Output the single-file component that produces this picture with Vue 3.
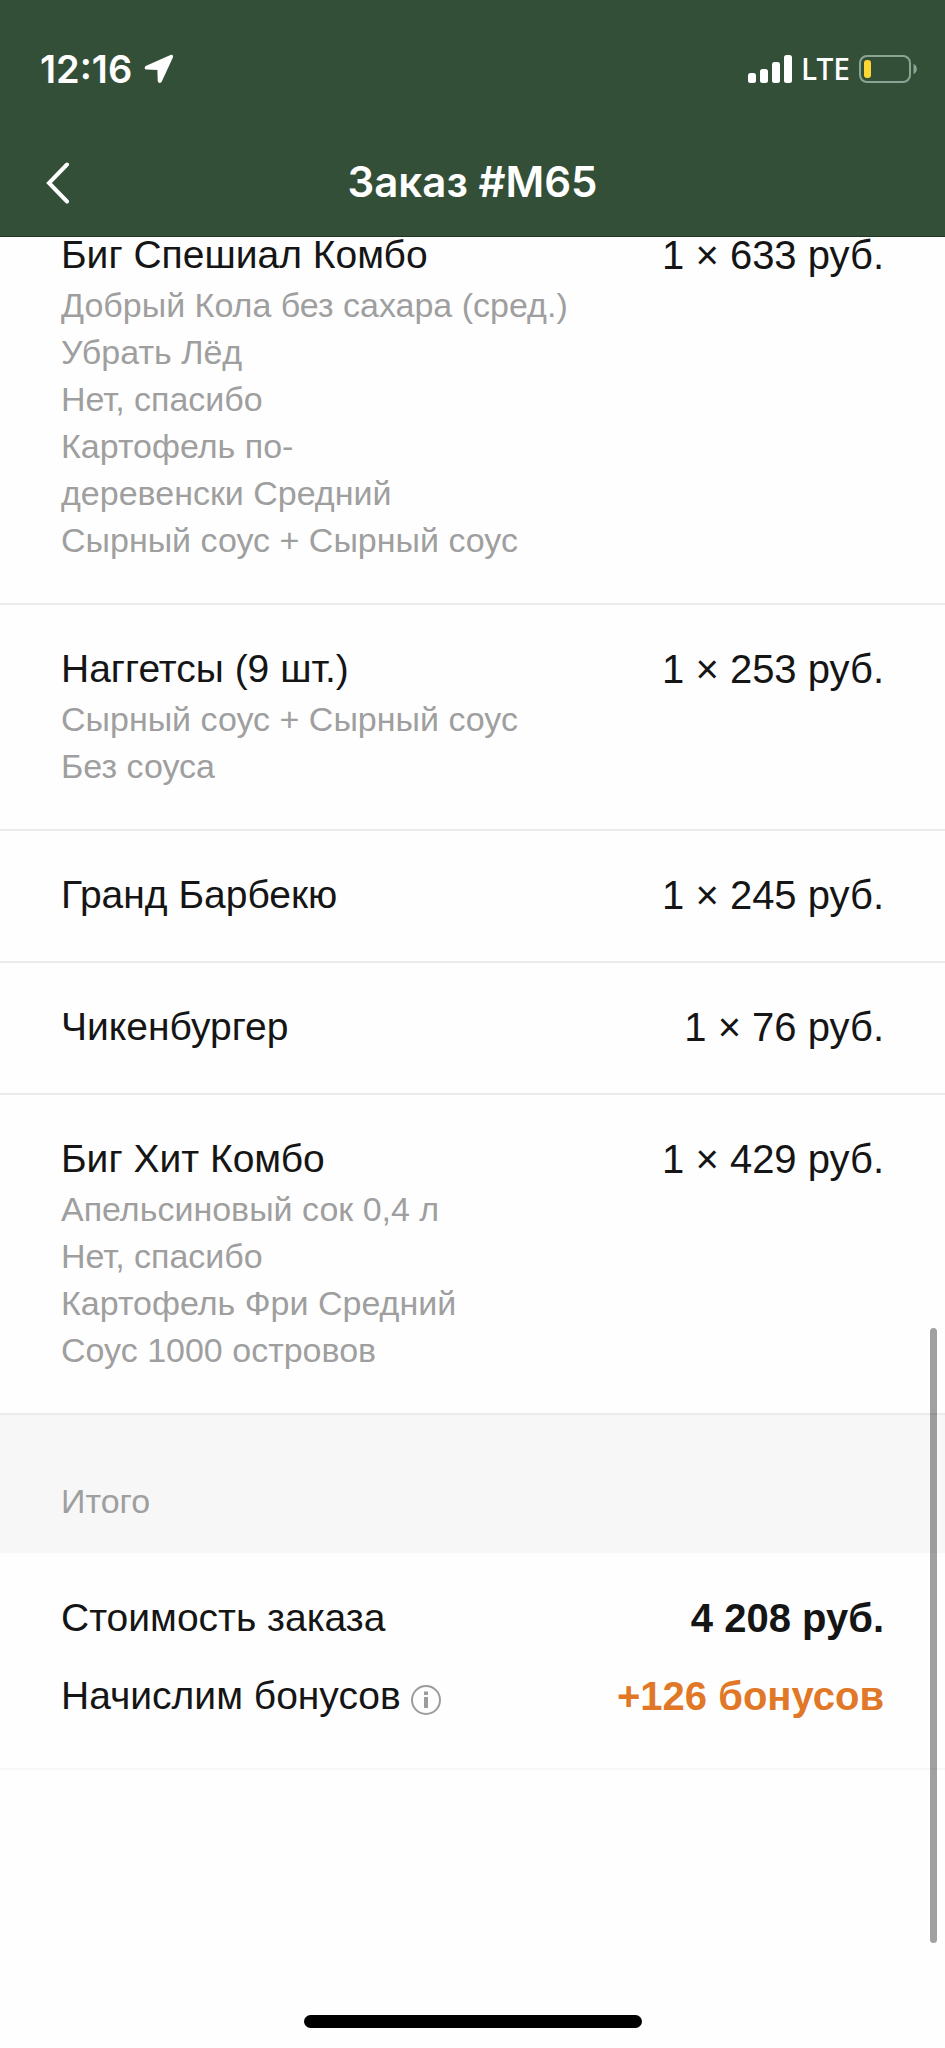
<script setup>
const items = [
  {
    name: 'Биг Спешиал Комбо',
    price: '1 × 633 руб.',
    options: [
      'Добрый Кола без сахара (сред.)',
      'Убрать Лёд',
      'Нет, спасибо',
      'Картофель по-',
      'деревенски Средний',
      'Сырный соус + Сырный соус',
    ],
  },
  {
    name: 'Наггетсы (9 шт.)',
    price: '1 × 253 руб.',
    options: ['Сырный соус + Сырный соус', 'Без соуса'],
  },
  { name: 'Гранд Барбекю', price: '1 × 245 руб.', options: [] },
  { name: 'Чикенбургер', price: '1 × 76 руб.', options: [] },
  {
    name: 'Биг Хит Комбо',
    price: '1 × 429 руб.',
    options: ['Апельсиновый сок 0,4 л', 'Нет, спасибо', 'Картофель Фри Средний', 'Соус 1000 островов'],
  },
]
</script>

<template>
  <div class="screen">
    <header class="header">
      <div class="status">
        <div class="status-left">
          <span class="time">12:16</span>
          <svg class="location" width="30" height="30" viewBox="0 0 30 30" aria-hidden="true">
            <path d="M26.5 1 2.200 11.700C0 12.700.300 15.500 2.800 15.600L13.400 15.900 13.700 26.500C13.800 29.200 16.800 29.800 17.900 27.300L29 3.200C29.600 1.500 28.200.300 26.500 1Z" fill="#fff" />
          </svg>
        </div>
        <div class="status-right">
          <svg width="44" height="28" viewBox="0 0 44 28" aria-hidden="true">
            <rect x="0" y="18" width="8" height="10" rx="2.500" fill="#fff" />
            <rect x="12" y="14" width="8" height="14" rx="2.500" fill="#fff" />
            <rect x="24" y="7" width="8" height="21" rx="2.500" fill="#fff" />
            <rect x="36" y="0" width="8" height="28" rx="2.500" fill="#fff" />
          </svg>
          <span class="network">LTE</span>
          <svg width="59" height="28" viewBox="0 0 59 28" aria-hidden="true">
            <rect x="1" y="1" width="50" height="26" rx="7" fill="none" stroke="#8da393" stroke-width="2" />
            <rect x="5" y="5" width="7" height="18" rx="3" fill="#fcd734" />
            <path d="M54.500 9C59 10.500 59 17.500 54.500 19Z" fill="#8da393" />
          </svg>
        </div>
      </div>
      <div class="nav">
        <button class="back" type="button" aria-label="Назад">
          <svg width="24" height="42" viewBox="0 0 24 42" aria-hidden="true">
            <path d="M21 2.500 3 21 21 39.500" fill="none" stroke="#fff" stroke-width="4" stroke-linecap="round" stroke-linejoin="miter" />
          </svg>
        </button>
        <h1 class="title">Заказ #М65</h1>
      </div>
    </header>

    <main class="content">
      <ul class="items">
        <li v-for="item in items" :key="item.name" class="item">
          <div class="row">
            <h2 class="name">{{ item.name }}</h2>
            <span class="price">{{ item.price }}</span>
          </div>
          <ul v-if="item.options.length" class="options">
            <li v-for="(option, i) in item.options" :key="i">{{ option }}</li>
          </ul>
        </li>
      </ul>

      <h2 class="section">Итого</h2>

      <dl class="totals">
        <div class="row">
          <dt>Стоимость заказа</dt>
          <dd>4 208 руб.</dd>
        </div>
        <div class="row">
          <dt>
            Начислим бонусов
            <button class="info" type="button" aria-label="Подробнее о бонусах">
              <svg width="30" height="30" viewBox="0 0 30 30" aria-hidden="true">
                <circle cx="15" cy="15" r="14" fill="none" stroke="#9c9c9c" stroke-width="2" />
                <path d="M13 6.500h4v3.500h-4zM13 12h4v11h-4z" fill="#9c9c9c" />
              </svg>
            </button>
          </dt>
          <dd class="bonus">+126 бонусов</dd>
        </div>
      </dl>
    </main>

    <div class="scroll-thumb"></div>
    <div class="home-indicator"></div>
  </div>
</template>

<style>
body {
  margin: 0;
}
</style>

<style scoped>
.screen {
  position: relative;
  display: flex;
  flex-direction: column;
  min-height: 100vh;
  background: #fefefe;
  color: #151515;
  font-family: "Liberation Sans", Arial, sans-serif;
}

.header {
  position: relative;
  z-index: 1;
  background: #334f38;
  color: #fff;
  font-family: Inter, sans-serif;
  border-bottom: 1px solid #1f3323;
}

.status {
  display: flex;
  justify-content: space-between;
  align-items: center;
  padding: 44px 27px 0 40px;
  height: 50px;
}

.status-left,
.status-right {
  display: flex;
  align-items: center;
}

.status-left {
  gap: 12px;
}

.status-right {
  gap: 9px;
}

.time {
  font-size: 38px;
  line-height: 50px;
  font-weight: 600;
}

.network {
  font-family: "Noto Sans", sans-serif;
  font-size: 30px;
  line-height: 50px;
  font-weight: 500;
}

.nav {
  display: grid;
  grid-template-columns: 1fr auto 1fr;
  align-items: center;
  padding: 48px 46px 14px;
}

.back {
  display: flex;
  justify-self: start;
  padding: 18px 0 16px;
  border: 0;
  background: none;
}

.title {
  grid-column: 2;
  margin: 0;
  font-size: 42px;
  line-height: 80px;
  font-weight: 600;
}

.content {
  margin-top: -46px;
}

.items,
.options {
  margin: 0;
  padding: 0;
  list-style: none;
}

.item {
  padding: 39px 61px 41px;
  border-bottom: 2px solid #ebebeb;
}

.row {
  display: flex;
  justify-content: space-between;
  gap: 24px;
  font-size: 39px;
  line-height: 50px;
}

.name {
  margin: 0;
  font-size: 39px;
  font-weight: 400;
}

.price {
  font-size: 40px;
  white-space: nowrap;
}

.options {
  margin: 2px 0 -2px;
  color: #9f9f9f;
  font-size: 34px;
  line-height: 47px;
}

.section {
  margin: 0;
  padding: 61px 61px 27px;
  background: #f7f7f7;
  color: #9f9f9f;
  font-size: 34px;
  line-height: 50px;
  font-weight: 400;
}

.totals {
  display: grid;
  gap: 28px;
  margin: 0;
  padding: 40px 61px 47px;
  border-bottom: 2px solid #f7f7f7;
}

dt {
  display: flex;
  align-items: center;
  gap: 10px;
}

dd {
  margin: 0;
  font-size: 40px;
  font-weight: 700;
  white-space: nowrap;
}

.bonus {
  color: #e07828;
}

.info {
  display: flex;
  padding: 8px 0 0;
  border: 0;
  background: none;
}

.scroll-thumb {
  position: absolute;
  top: 1328px;
  right: 8px;
  width: 7px;
  height: 615px;
  border-radius: 4px;
  background: rgba(0, 0, 0, 0.37);
}

.home-indicator {
  width: 338px;
  height: 13px;
  margin: auto auto 20px;
  border-radius: 7px;
  background: #000;
}
</style>
